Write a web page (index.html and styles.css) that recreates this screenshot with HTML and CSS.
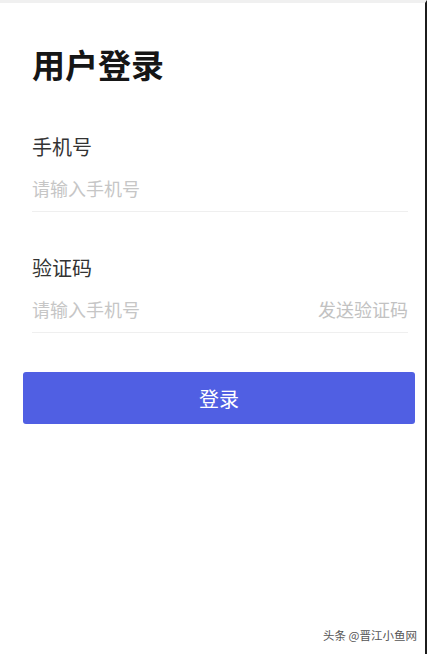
FILE: index.html
```html
<!DOCTYPE html>
<html lang="zh-CN">
<head>
  <meta charset="UTF-8">
  <title>用户登录</title>
  <link rel="stylesheet" href="styles.css">
</head>
<body>
  <div class="page">
    <main class="login">
      <h1 class="title">用户登录</h1>

      <div class="field field-first">
        <label class="field-label" for="phone">手机号</label>
        <div class="field-row">
          <input type="tel" id="phone" placeholder="请输入手机号">
        </div>
      </div>

      <div class="field">
        <label class="field-label" for="code">验证码</label>
        <div class="field-row">
          <input type="text" id="code" placeholder="请输入手机号">
          <span class="send-code">发送验证码</span>
        </div>
      </div>

      <button class="login-btn">登录</button>
    </main>

    <footer class="watermark">头条 @晋江小鱼网</footer>
  </div>
</body>
</html>
```

FILE: styles.css
```css
body {
  margin: 0;
  background: #fff;
  font-family: "Noto Sans CJK SC", "Noto Sans", sans-serif;
}
.page {
  height: 654px;
  box-sizing: border-box;
  display: flex;
  flex-direction: column;
  border-top: 3px solid #f0f0f0;
  border-right: 2px solid #1c1c1c;
}
.login {
  padding: 41px 10px 0 23px;
}
.title {
  margin: 0 0 0 9px;
  font-size: 33px;
  line-height: 40px;
  font-weight: bold;
  color: #161616;
}
.field {
  margin: 44px 7px 0 9px;
}
.field-first {
  margin-top: 51px;
}
.field-label {
  display: block;
  font-size: 20px;
  line-height: 24px;
  color: #333;
}
.field-row {
  display: flex;
  align-items: center;
  margin-top: 17px;
  padding-bottom: 11px;
  border-bottom: 1px solid #efefef;
}
input {
  flex: 1;
  min-width: 0;
  padding: 0;
  border: none;
  outline: none;
  font-family: inherit;
  font-size: 18px;
  line-height: 24px;
  height: 24px;
  color: #333;
}
input::placeholder {
  color: #c6c6c6;
}
.send-code {
  font-size: 18px;
  line-height: 24px;
  color: #c2c2c2;
}
.login-btn {
  display: block;
  width: 100%;
  height: 52px;
  margin-top: 39px;
  border: none;
  border-radius: 3px;
  background: #505fe3;
  color: #fff;
  font-family: inherit;
  font-size: 20px;
  cursor: pointer;
}
.watermark {
  margin-top: auto;
  padding: 0 8px 11px 0;
  text-align: right;
  font-size: 11.5px;
  color: #555;
}
```
